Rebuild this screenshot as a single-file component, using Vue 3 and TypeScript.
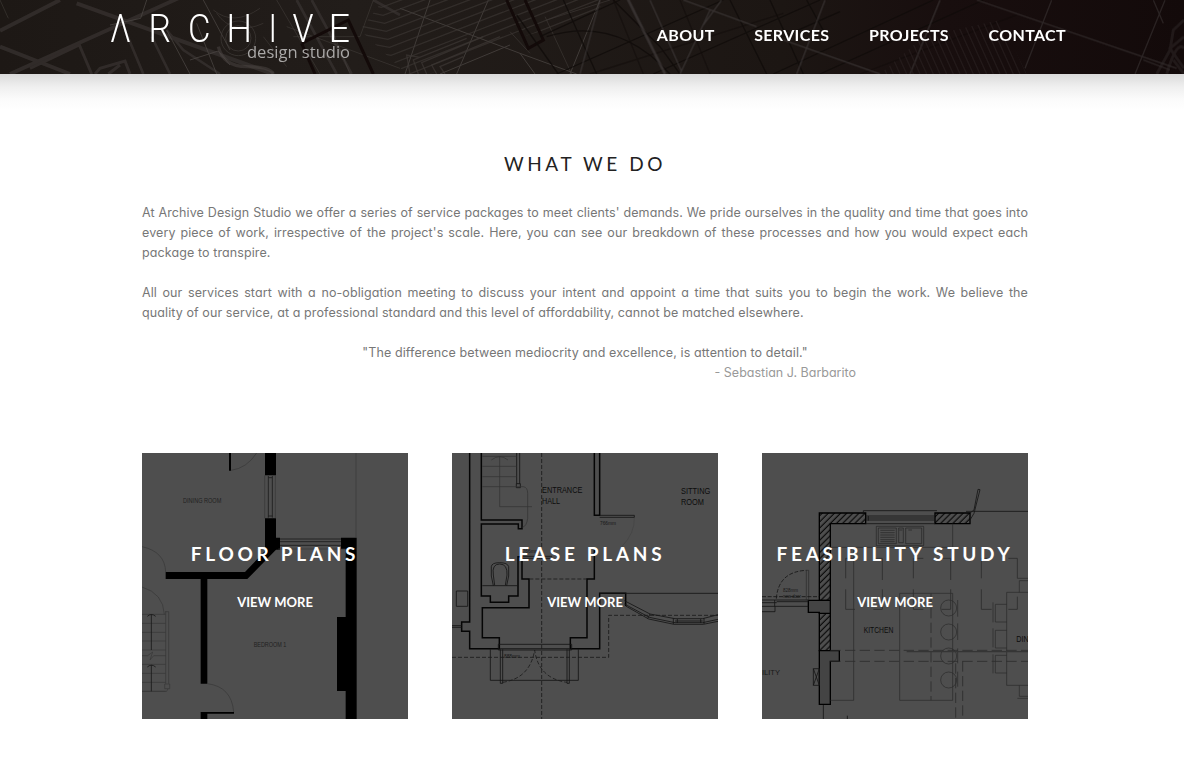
<script setup lang="ts">
interface Line {
  text: string
  last?: boolean
}

interface Letter {
  char: string
  x: number
  width: number
}

const logo: Letter[] = [
  { char: 'Λ', x: 110, width: 21 },
  { char: 'R', x: 148.5, width: 22.5 },
  { char: 'C', x: 188, width: 22.5 },
  { char: 'H', x: 226.5, width: 25.5 },
  { char: 'I', x: 268.5, width: 8.5 },
  { char: 'V', x: 292.5, width: 21 },
  { char: 'E', x: 328.5, width: 21.5 },
]

const nav = ['ABOUT', 'SERVICES', 'PROJECTS', 'CONTACT']

const paragraphs: Line[][] = [
  [
    { text: "At Archive Design Studio we offer a series of service packages to meet clients' demands. We pride ourselves in the quality and time that goes into" },
    { text: "every piece of work, irrespective of the project's scale. Here, you can see our breakdown of these processes and how you would expect each" },
    { text: 'package to transpire.', last: true },
  ],
  [
    { text: 'All our services start with a no-obligation meeting to discuss your intent and appoint a time that suits you to begin the work. We believe the' },
    { text: 'quality of our service, at a professional standard and this level of affordability, cannot be matched elsewhere.', last: true },
  ],
]

const steps = [493, 520, 547, 573, 600, 643, 670, 697, 724]
const hedge = Array.from({ length: 17 }, (_, i) => i * 24)
const stools = [474, 546, 618, 690]
const chairs = [463, 541, 616]
</script>

<template>
  <div class="page">
    <header class="header">
      <svg class="header-art" viewBox="0 0 3552 222" preserveAspectRatio="none" aria-hidden="true">
        <defs>
          <linearGradient id="headerTone">
            <stop offset="0" stop-color="#1d1815" />
            <stop offset="0.3" stop-color="#221d1a" />
            <stop offset="0.66" stop-color="#1c1613" />
            <stop offset="0.8" stop-color="#180e0e" />
            <stop offset="1" stop-color="#130a0a" />
          </linearGradient>
          <clipPath id="hedgeArea"><path d="M1150 0H1830L1740 60 1500 130 1290 222H1220L1080 90Z" /></clipPath>
          <clipPath id="gridArea"><path d="M2770 110L3000 60 3080 222H2640Z" /></clipPath>
        </defs>
        <rect width="3552" height="222" fill="url(#headerTone)" />
        <g class="soft">
          <g fill="none" stroke="#393432" stroke-width="12" opacity=".7">
            <path d="M0 92L180 0M0 140L210 222M30 222L590 -30M230 10L820 222" />
            <path d="M90 205L238 135 275 222M285 222L300 205 375 183 390 222M325 222L360 195" stroke-width="9" />
            <path d="M375 90L430 222M455 110L510 222M500 90L550 150L660 222" stroke-width="8" />
            <path d="M890 0L1010 222M935 0L1055 222M1120 0L1200 45" stroke-width="8" />
          </g>
          <g fill="none" stroke="#4c4744" stroke-width="3" opacity=".75">
            <path d="M440 0L422 55 330 75M500 90L570 222M570 180L655 153 690 195M590 70L650 222M610 0L690 150" />
            <path d="M650 40Q700 110 790 70M640 30Q700 80 780 25M790 110L860 200M1120 0L1080 110 880 110M860 80L1200 205" opacity=".6" />
            <circle cx="715" cy="115" r="38" opacity=".7" /><circle cx="715" cy="115" r="52" opacity=".7" />
            <path d="M0 0L25 55M830 0L960 222M1000 100L1050 222" opacity=".6" />
            <path d="M1200 25L1560 160 1730 222M1290 0L1215 222M1465 0L1370 222M1800 0L1710 222M1560 160L1605 222M1320 222L1530 135" />
            <path d="M1635 50L1715 222M1530 95L1590 160M1640 60L1830 0" opacity=".6" />
          </g>
          <path d="M655 140Q670 200 740 200T820 222" fill="none" stroke="#4b4643" stroke-width="10" opacity=".5" />
          <g clip-path="url(#hedgeArea)" fill="none" stroke="#3d3835" stroke-width="4" opacity=".65">
            <path v-for="n in hedge" :key="n" :d="`M1060 ${n - 70}L${1130 + n / 5} ${n - 50}L1900 ${n - 330}`" />
          </g>
          <path d="M1230 222L1220 165 1260 172M1255 222L1240 180 1400 115M1280 222L1265 188 1450 110M1310 222L1295 195 1500 110M1335 222L1320 200 1390 170" fill="none" stroke="#3d3835" stroke-width="4" opacity=".7" />
          <g fill="none" stroke="#130a09" stroke-width="9">
            <path d="M905 130L1045 60L1120 222M905 130L945 222M1520 0L1585 145 1630 120 1575 0" />
          </g>
          <g fill="none" stroke="#100c0a" stroke-width="4" opacity=".8">
            <path d="M1690 0L1790 222M1550 45L1675 222M1640 110Q1850 45 2010 222M1840 0L1980 140 2040 222" />
            <path d="M1620 110L1860 0M1670 222L2170 0M1960 222L2460 0M2320 222L2800 0M2460 222L2950 0M2190 0L2300 222M2310 0L2410 222M2350 110L2520 35M2420 0L2480 110" />
            <path d="M1840 0L1930 222M2040 0L2130 222M1770 222L2350 40M2580 222L3050 45" opacity=".6" />
          </g>
          <g fill="none" stroke="#454040" stroke-width="4" opacity=".65">
            <path d="M1880 -10L1995 222" stroke-width="8" />
            <path d="M1950 0L2045 215M2130 30L2040 222M2165 0L2110 75M2050 0L2270 80M1740 222L1800 0" />
            <path d="M2475 0L2390 222M2350 120L2640 222M2820 0L2730 222" />
            <path d="M2930 0L3530 205M3155 0L3075 205M3495 0L3405 222M3430 180L3510 210M3460 0L3490 70" opacity=".75" />
            <path d="M3552 60L3520 90 3510 150 3470 222M3552 110L3510 145 3552 205M3500 222Q3530 120 3552 145M3520 180L3552 222" stroke-width="9" opacity=".45" />
          </g>
          <g clip-path="url(#gridArea)" fill="none" stroke="#292020" stroke-width="4" opacity=".7">
            <path v-for="n in 28" :key="n" :d="`M${2540 + n * 20} 0L${2640 + n * 20} 222`" />
          </g>
        </g>
      </svg>
      <svg class="logo" viewBox="100 0 260 74" role="img" aria-label="Archive design studio">
        <text v-for="letter in logo" :key="letter.char" class="logo-letter" :x="letter.x" y="41.5" :textLength="letter.width" lengthAdjust="spacingAndGlyphs">{{ letter.char }}</text>
        <text class="logo-sub" x="247" y="58" textLength="103" lengthAdjust="spacingAndGlyphs">design studio</text>
      </svg>
      <nav class="nav">
        <a v-for="item in nav" :key="item" class="nav-link">{{ item }}</a>
      </nav>
    </header>
    <div class="shade"></div>

    <main class="content">
      <h1 class="heading">WHAT WE DO</h1>
      <p v-for="(lines, i) in paragraphs" :key="i" class="paragraph">
        <span v-for="line in lines" :key="line.text" class="line" :class="{ last: line.last }">{{ line.text }}</span>
      </p>
      <p class="quote">"The difference between mediocrity and excellence, is attention to detail."</p>
      <p class="author">- Sebastian J. Barbarito</p>

      <section class="cards">
        <article class="card">
          <svg class="plan" viewBox="6 9 798 798" aria-hidden="true">
            <g fill="#000">
              <path d="M375 9h33v67h-33zM375 205h33v58h12v36h-12L322 387H202V701h-20V387H77V366H315L375 303zM603 263h47V807h-33V723h-26V501h26V297h-14zM182 786h100v5h-80v16h-20zM267 9h6v53h-6z" />
            </g>
            <g fill="none" stroke="#363636" stroke-width="2">
              <path d="M273 61Q320 55 350 9M648 9V263M374 76V205M406 76V205M415 297H617" />
              <path d="M6 290Q75 305 77 366M6 411Q70 430 73 493M75 485H86V701M77 485V701M202 701Q275 710 281 786M6 724H80L84 716M74 702H89V716H74Z" />
              <path v-for="y in steps" :key="y" :d="`M6 ${y}H77`" />
              <path d="M6 617H23L38 606 30 630 41 617H77" />
            </g>
            <path d="M385 78V203M397 78V203M385 83H397M385 198H397M420 267H603M420 275H603M420 286H603" fill="none" stroke="#1c1c1c" stroke-width="2.5" />
            <path d="M34 600V493M22 499Q34 488 47 499M34 724V645M22 651Q34 640 47 651" fill="none" stroke="#181818" stroke-width="2.5" />
            <text class="room faint" x="129" y="159" textLength="115" lengthAdjust="spacingAndGlyphs">DINING ROOM</text>
            <text class="room faint" x="341" y="591" textLength="98" lengthAdjust="spacingAndGlyphs">BEDROOM 1</text>
          </svg>
          <h2 class="card-title">FLOOR PLANS</h2>
          <a class="more">VIEW MORE</a>
        </article>

        <article class="card">
          <svg class="plan" viewBox="6 9 798 798" aria-hidden="true">
            <path d="M59 9V516H35V544H59V596H148V563H97V473H237V387H216V320H204V438H176V457H121V438H94V222H205V236H216V210H94V9M433 9V196H449V9M433 300V387H411V563H361V596H449V430H527V468" fill="none" stroke="#050505" stroke-width="4.5" />
            <g fill="none" stroke="#151515" stroke-width="2.5">
              <path d="M145 583H365V600H145ZM148 596H361M121 598V691H385V598M151 598V700H158V598M351 598V700H358V598M449 430H804M449 196H553V202H449M216 319H305V325H216M6 527H35M6 532H35M19 423H53V469H19Z" />
              <path d="M523 452L600 492 675 506H758L804 494M523 462L598 502 675 518H758L804 508M527 468L596 507 672 523H760L804 514M600 492L593 506M670 505V522M682 507V519M752 507V519M762 505V522M675 513H758" />
              <path d="M97 407H204M130 407L124 378V350Q125 338 149 338T176 350V378L170 407M134 406L130 375Q125 342 149 342T171 375L166 406M199 101H211V113H199ZM200 9V101M209 9V101" />
            </g>
            <g fill="none" stroke="#303030" stroke-width="2">
              <path d="M97 49H200M97 80H200M97 19H200M97 110H220Q233 112 233 130V205Q230 229 217 232M149 19V170H246M124 30Q149 10 174 30" />
              <path d="M553 202Q555 250 515 290" opacity=".4" />
            </g>
            <g fill="none" stroke="#1b1b1b" stroke-width="2.5" stroke-dasharray="12 6">
              <path d="M275 9V807M6 622H476V496H804M220 387H411M158 697Q240 685 254 600Q265 685 351 697" />
            </g>
            <text class="room large" x="276" y="128" textLength="121" lengthAdjust="spacingAndGlyphs">ENTRANCE</text>
            <text class="room large" x="276" y="161" textLength="54" lengthAdjust="spacingAndGlyphs">HALL</text>
            <text class="room large" x="693" y="131" textLength="88" lengthAdjust="spacingAndGlyphs">SITTING</text>
            <text class="room large" x="693" y="165" textLength="69" lengthAdjust="spacingAndGlyphs">ROOM</text>
            <text class="room tiny" x="450" y="225" textLength="48" lengthAdjust="spacingAndGlyphs">766mm</text>
            <text class="room tiny" x="162" y="623" textLength="48" lengthAdjust="spacingAndGlyphs">888mm</text>
            <text class="room tiny" x="218" y="310" textLength="48" lengthAdjust="spacingAndGlyphs">766mm</text>
          </svg>
          <h2 class="card-title">LEASE PLANS</h2>
          <a class="more">VIEW MORE</a>
        </article>

        <article class="card">
          <svg class="plan" viewBox="6 9 798 798" aria-hidden="true">
            <defs>
              <pattern id="wallHatch" width="13" height="13" patternUnits="userSpaceOnUse" patternTransform="rotate(45)">
                <path d="M6 0V13" stroke="#0a0a0a" stroke-width="3.5" />
              </pattern>
            </defs>
            <path d="M178 189H317V221H211V451H178ZM525 189H630V221H525ZM178 490H211V602H178Z" fill="url(#wallHatch)" stroke="#000" stroke-width="4" />
            <path d="M145 451H211V490H178V487H145ZM178 602H238V634H211V763H178Z" fill="#444" stroke="#000" stroke-width="4" />
            <g fill="none" stroke="#161616" stroke-width="2.5">
              <path d="M310 182H531M310 182V189M317 198H525M317 204H525M317 210H525M317 221H525M325 198V212M618 184H804M630 189L642 180 654 118 660 119 642 190 630 210M6 450H145M6 458H50M6 469H145M6 485H45V470M44 450V470M50 455H145M160 656H178V706H160ZM160 656L178 706M178 656L160 706M190 765V807M262 797V807" />
              <path d="M349 229H491V287H349ZM355 234H409V281H355ZM416 234H430V278H416ZM437 234H485V281H437ZM361 241H404M361 248H404M361 255H404M361 262H404M361 269H404M361 275H404M418 240H427M445 240H456" opacity=".6" />
            </g>
            <g fill="none" stroke="#292929" stroke-width="2">
              <path d="M281 292V751H211M211 292H578M578 221V325M419 430H578V751H419ZM804 427H740V706H804M778 427V392H804M772 385H804M778 706V739H804M772 745H804M699 457V517M593 450V500M593 520V570M593 595V640M593 665V710M699 535V592M699 613V670" />
              <circle v-for="y in stools" :key="y" cx="566" :cy="y" r="24" />
              <path v-for="y in chairs" :key="y" :d="`M740 ${y}H706V${y + 53}H740`" />
              <path d="M139 361H146V451M139 361V451" />
            </g>
            <g fill="none" stroke="#2c2c2c" stroke-width="2.5" stroke-dasharray="31 13">
              <path d="M211 601H804M211 634H804M513 430V751M587 640V807M608 634V807" />
              <path d="M257 385V325H285M340 325H367V390M367 418V478H340M285 478H257V418M460 385V325H490M545 325H572V390M572 418V478H545M490 478H460V418M664 385V325H695M745 325H772V385M772 440V478H745M695 478H664V418" stroke-dasharray="none" />
            </g>
            <path d="M440 605H804" stroke="#353535" stroke-width="4" />
            <path d="M49 446Q55 365 139 361M6 440H178" fill="none" stroke="#151515" stroke-width="2.5" stroke-dasharray="12 5" />
            <text class="room large" x="311" y="548" textLength="89" lengthAdjust="spacingAndGlyphs">KITCHEN</text>
            <text class="room large" x="769" y="576" textLength="76" lengthAdjust="spacingAndGlyphs">DINING</text>
            <text class="room utility" x="-8" y="674" textLength="68" lengthAdjust="spacingAndGlyphs">TILITY</text>
            <text class="room tiny" x="69" y="426" textLength="45" lengthAdjust="spacingAndGlyphs">828mm</text>
            <text class="room tiny" x="69" y="445" textLength="54" lengthAdjust="spacingAndGlyphs">new door</text>
          </svg>
          <h2 class="card-title">FEASIBILITY STUDY</h2>
          <a class="more">VIEW MORE</a>
        </article>
      </section>
    </main>
  </div>
</template>

<style>
body {
  margin: 0;
  background: #fff;
}
</style>

<style scoped>
.page {
  width: 1184px;
  height: 762px;
  overflow: hidden;
  background: #fff;
  font-family: Lato, "Open Sans", sans-serif;
}

.header {
  position: relative;
  display: flex;
  justify-content: space-between;
  height: 74px;
  background: #1d1815;
}

.header-art {
  position: absolute;
  inset: 0;
  width: 100%;
  height: 100%;
}

.soft {
  filter: blur(1.2px);
}

.logo {
  position: relative;
  width: 260px;
  height: 74px;
  margin-left: 100px;
}

.logo-letter {
  font: 300 38px Roboto, sans-serif;
  fill: #fff;
}

.logo-sub {
  font: 400 16px "Open Sans", sans-serif;
  fill: #aaa8a7;
}

.nav {
  position: relative;
  display: flex;
  gap: 39.6px;
  margin-right: 118px;
  line-height: 69px;
}

.nav-link {
  color: #fff;
  font-size: 16px;
  font-weight: 700;
  letter-spacing: 0.35px;
}

.shade {
  height: 36px;
  background: linear-gradient(#dadada, #efefef 35%, #fbfbfb 70%, #fff);
}

.content {
  width: 886px;
  margin-left: 142px;
}

.heading {
  margin: 39px 0 24px;
  color: #222;
  font-size: 19px;
  font-weight: 400;
  line-height: 30px;
  letter-spacing: 3.6px;
  text-align: center;
}

.paragraph {
  margin: 0 0 20px;
}

.paragraph,
.quote,
.author {
  color: #777;
  font-family: Inter, sans-serif;
  font-feature-settings: "cv11";
  font-size: 12.5px;
  line-height: 20px;
  letter-spacing: 0.1px;
}

.line {
  display: block;
  white-space: nowrap;
  text-align-last: justify;
}

.line.last {
  text-align-last: left;
}

.quote {
  margin: 0;
  text-align: center;
}

.author {
  margin: 0;
  padding-right: 172px;
  color: #999;
  letter-spacing: 0;
  text-align: right;
}

.cards {
  display: flex;
  gap: 44px;
  margin-top: 70px;
}

.card {
  position: relative;
  width: 266px;
  height: 266px;
  overflow: hidden;
  background: #4e4e4e;
  color: #fff;
  text-align: center;
}

.plan {
  position: absolute;
  inset: 0;
  width: 100%;
  height: 100%;
}

.room {
  font: 20px "Liberation Sans", sans-serif;
  fill: #181818;
}

.faint {
  font-size: 19px;
  fill: #222;
}

.large {
  font-size: 25px;
  fill: #0c0c0c;
}

.utility {
  font-size: 24px;
}

.tiny {
  font-size: 16px;
}

.card-title {
  position: relative;
  margin: 86px 0 0;
  font-size: 19px;
  font-weight: 700;
  line-height: 30px;
  letter-spacing: 3.7px;
  white-space: nowrap;
}

.more {
  position: relative;
  display: block;
  margin-top: 23px;
  font-size: 13px;
  font-weight: 700;
  line-height: 20px;
}
</style>
